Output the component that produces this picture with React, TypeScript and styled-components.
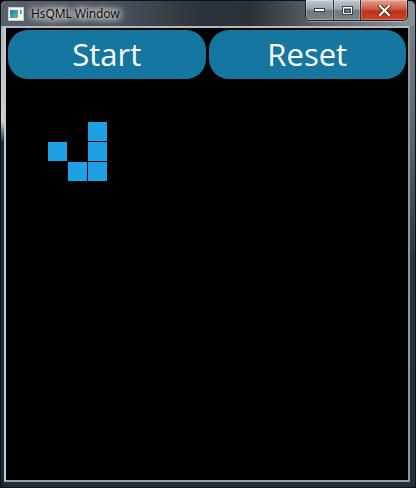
import React from "react";
import styled, { createGlobalStyle } from "styled-components";

const Global = createGlobalStyle`
  html, body { margin: 0; padding: 0; background: #000; }
  body { width: 416px; height: 488px; overflow: hidden; font-family: "Open Sans", "Noto Sans", sans-serif; }
`;

const Window = styled.div`
  position: relative;
  width: 416px;
  height: 488px;
  box-sizing: border-box;
  display: flex;
  flex-direction: column;
  background:
    linear-gradient(to bottom, #aab2ba 0px, #cfd4d8 120px, #1f2730 141px, #1f2730 100%) left top / 4px 100% no-repeat,
    linear-gradient(to bottom, #7c838b 0px, #5a626b 140px, #2a323b 260px, #242c35 100%) right top / 6px 100% no-repeat,
    #242c35;
  border: 1px solid #0e1318;
  border-radius: 6px 6px 0 0;
`;

const TitleBar = styled.div`
  height: 25px;
  display: flex;
  align-items: center;
  padding-left: 7px;
  gap: 7px;
  background: linear-gradient(to right, #59606a 0px, #4a515a 120px, #2c3239 200px, #2b3138 250px, #5f666e 320px, #8a9197 416px);
  border-radius: 6px 6px 0 0;
`;

const AppIcon = styled.svg`
  width: 16px;
  height: 14px;
  flex: none;
`;

const Title = styled.span`
  font-family: "Noto Sans", "Open Sans", sans-serif;
  font-size: 12px;
  color: #101010;
  text-shadow: 0 0 6px #fff, 0 0 8px #fff, 0 0 10px #e8eaec;
  letter-spacing: -0.1px;
`;

const CaptionGroup = styled.div`
  position: absolute;
  top: -1px;
  right: 7px;
  display: flex;
  height: 20px;
  border: 1px solid #1b2027;
  border-top: none;
  border-radius: 0 0 5px 5px;
  overflow: hidden;
  box-shadow: 0 1px 0 rgba(255,255,255,0.35);
`;

const CaptionButton = styled.div<{ $w: number; $close?: boolean; $first?: boolean }>`
  width: ${(p) => p.$w}px;
  height: 100%;
  display: flex;
  align-items: center;
  justify-content: center;
  box-sizing: border-box;
  border-left: ${(p) => (p.$first ? "none" : "1px solid #2b3138")};
  background: ${(p) =>
    p.$close
      ? "linear-gradient(to bottom, #e3a497 0%, #cf5a43 45%, #b8321c 55%, #c9462c 100%)"
      : "linear-gradient(to bottom, #c4cbd2 0%, #9aa2aa 45%, #6d757d 55%, #7c848c 100%)"};
  box-shadow: inset 0 0 0 1px rgba(255,255,255,0.25);
`;

const ClientFrame = styled.div`
  flex: 1;
  margin: 0 5px 5px 3px;
  border: 2px solid #a9b0b6;
  border-color: #b4bac0 #8e969e #98a0a7 #c3c8cd;
  background: #000;
  display: flex;
  flex-direction: column;
`;

const ButtonRow = styled.div`
  display: flex;
  gap: 3px;
  padding: 2px 2px 0 2px;
`;

const BigButton = styled.button`
  flex: 1;
  height: 49px;
  border: none;
  border-radius: 20px;
  background: #15769f;
  color: #fff;
  font-family: "Open Sans", "Noto Sans", sans-serif;
  font-size: 31px;
  line-height: 49px;
  padding: 0;
  cursor: pointer;
`;

const Board = styled.div`
  flex: 1;
  position: relative;
`;

const Block = styled.div`
  position: absolute;
  width: 19px;
  height: 19px;
  background: #1ea1e2;
`;

const blocks = [
  { x: 82, y: 43 },
  { x: 82, y: 63 },
  { x: 82, y: 83 },
  { x: 62, y: 83 },
  { x: 42, y: 63 },
];

export default function App() {
  return (
    <>
      <Global />
      <Window>
        <TitleBar>
          <AppIcon viewBox="0 0 16 14">
            <rect x="0.5" y="0.5" width="15" height="13" fill="#f4f6f8" stroke="#c8ccd0" />
            <rect x="2" y="3" width="8" height="8" fill="url(#g)" />
            <rect x="12" y="3" width="1.5" height="4" fill="#3a7fc0" />
            <defs>
              <linearGradient id="g" x1="0" y1="0" x2="1" y2="1">
                <stop offset="0" stopColor="#2f6fb8" />
                <stop offset="0.5" stopColor="#3aa0a0" />
                <stop offset="1" stopColor="#7ac04a" />
              </linearGradient>
            </defs>
          </AppIcon>
          <Title>HsQML Window</Title>
        </TitleBar>
        <CaptionGroup>
          <CaptionButton $w={27} $first>
            <svg width="11" height="4" viewBox="0 0 11 4">
              <rect x="0.5" y="0.5" width="10" height="3" fill="#fff" stroke="#3a4048" />
            </svg>
          </CaptionButton>
          <CaptionButton $w={27}>
            <svg width="11" height="9" viewBox="0 0 11 9">
              <rect x="0.5" y="0.5" width="10" height="8" fill="none" stroke="#3a4048" />
              <rect x="1.5" y="1.5" width="8" height="6" fill="none" stroke="#fff" />
              <rect x="2.5" y="3.5" width="6" height="3" fill="none" stroke="#3a4048" />
            </svg>
          </CaptionButton>
          <CaptionButton $w={47} $close>
            <svg width="13" height="11" viewBox="0 0 13 11">
              <path d="M2 1 L11 10 M11 1 L2 10" stroke="#5a1a10" strokeWidth="4" strokeLinecap="square" />
              <path d="M2 1 L11 10 M11 1 L2 10" stroke="#fff" strokeWidth="2.2" strokeLinecap="square" />
            </svg>
          </CaptionButton>
        </CaptionGroup>
        <ClientFrame>
          <ButtonRow>
            <BigButton>Start</BigButton>
            <BigButton>Reset</BigButton>
          </ButtonRow>
          <Board>
            {blocks.map((b, i) => (
              <Block key={i} style={{ left: b.x, top: b.y }} />
            ))}
          </Board>
        </ClientFrame>
      </Window>
    </>
  );
}
